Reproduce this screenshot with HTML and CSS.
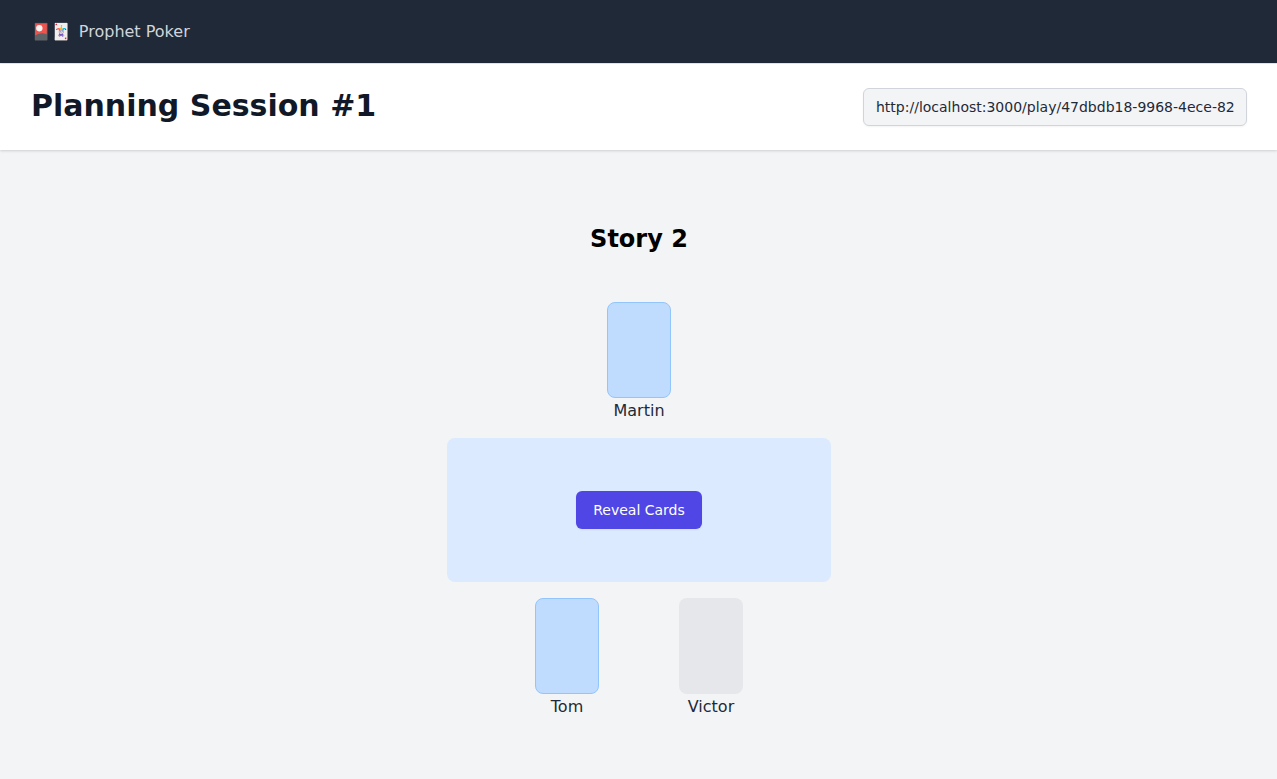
FILE: index.html
```html
<!DOCTYPE html>
<html lang="en">
<head>
<meta charset="utf-8">
<meta name="viewport" content="width=device-width, initial-scale=1">
<title>Prophet Poker</title>
<link rel="stylesheet" href="styles.css">
</head>
<body>
<nav class="navbar"><span class="logo" aria-hidden="true">🎴🃏</span><span class="brand">Prophet Poker</span></nav>
<header class="page-header">
  <h1 class="page-title">Planning Session #1</h1>
  <input class="share-link" type="text" readonly aria-label="Session link" value="http://localhost:3000/play/47dbdb18-9968-4ece-82">
</header>
<main class="board">
  <h2 class="story">Story 2</h2>
  <div class="seats">
    <div class="player"><div class="card card-played"></div><span>Martin</span></div>
  </div>
  <div class="table"><button class="reveal" type="button">Reveal Cards</button></div>
  <div class="seats">
    <div class="player"><div class="card card-played"></div><span>Tom</span></div>
    <div class="player"><div class="card"></div><span>Victor</span></div>
  </div>
</main>
</body>
</html>
```
FILE: styles.css
```css
*, *::before, *::after { box-sizing: border-box; }
body {
  margin: 0;
  min-height: 100vh;
  background: #f3f4f6;
  color: #1f2937;
  font: 16px/24px "DejaVu Sans", sans-serif;
}
.navbar {
  display: flex;
  align-items: center;
  gap: 8px;
  height: 64px;
  padding: 0 31px;
  background: #1f2937;
  border-bottom: 1px solid #e5e7eb;
  color: #d1d5db;
}
.logo { font-family: "Noto Color Emoji", sans-serif; }
.page-header {
  display: flex;
  align-items: center;
  justify-content: space-between;
  gap: 24px;
  padding: 24px 30px 24px 31px;
  background: #fff;
  box-shadow: 0 1px 3px rgba(0, 0, 0, 0.1), 0 1px 2px rgba(0, 0, 0, 0.06);
}
.page-title {
  margin: 0;
  padding-bottom: 2px;
  color: #111827;
  font-size: 30px;
  line-height: 36px;
  font-weight: 700;
}
.share-link {
  width: 384px;
  height: 38px;
  padding: 8px 12px;
  border: 1px solid #d1d5db;
  border-radius: 6px;
  background: #f3f4f6;
  color: #1f2937;
  font: 14px/20px "DejaVu Sans", sans-serif;
  box-shadow: 0 1px 2px rgba(0, 0, 0, 0.05);
}
.board {
  display: flex;
  flex-direction: column;
  align-items: center;
  gap: 16px;
  padding: 73px 31px 60px 32px;
}
.story {
  margin: 0 0 31px;
  color: #000;
  font-size: 24px;
  line-height: 32px;
  font-weight: 700;
}
.seats { display: flex; justify-content: center; gap: 80px; }
.player {
  display: flex;
  flex-direction: column;
  align-items: center;
  gap: 2px;
  width: 64px;
  line-height: 22px;
}
.card {
  width: 64px;
  height: 96px;
  border-radius: 8px;
  background: #e5e7eb;
}
.card-played { background: #bfdbfe; border: 1px solid #93c5fd; }
.table {
  display: flex;
  align-items: center;
  justify-content: center;
  width: 384px;
  max-width: 100%;
  height: 144px;
  border-radius: 8px;
  background: #dbeafe;
}
.reveal {
  padding: 8px 16px;
  border: 1px solid transparent;
  border-radius: 6px;
  background: #4f46e5;
  color: #fff;
  font: 14px/20px "DejaVu Sans", sans-serif;
  box-shadow: 0 1px 2px rgba(0, 0, 0, 0.05);
}
```
